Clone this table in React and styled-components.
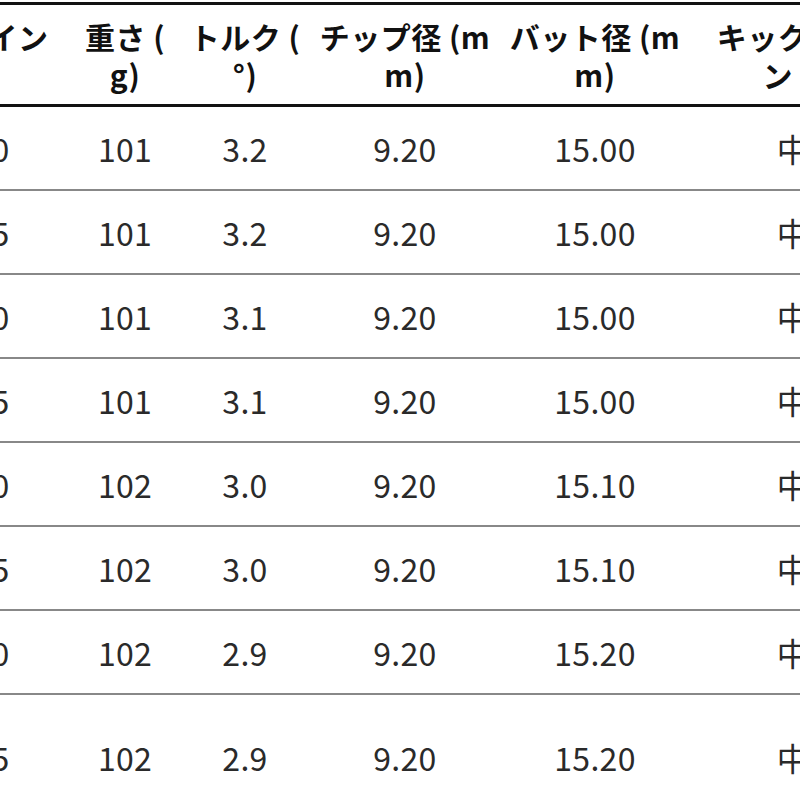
import styled, { createGlobalStyle } from "styled-components";

const GlobalStyle = createGlobalStyle`
    html, body {
        margin: 0;
        padding: 0;
        background: #FFFFFF;
    }
    body {
        font-family: "Noto Sans CJK JP", "Noto Sans", sans-serif;
        color: #222222;
    }
`

const COLUMNS = [
    { width: 174, label: ["長さ (イン", "チ)"] },
    { width: 120, label: ["重さ (", "g)"] },
    { width: 120, label: ["トルク (", "°)"] },
    { width: 200, label: ["チップ径 (m", "m)"] },
    { width: 180, label: ["バット径 (m", "m)"] },
    { width: 216, label: ["キックポイ", "ント"] },
]

const ROWS = [
    ["41.0", "101", "3.2", "9.20", "15.00", "中"],
    ["40.5", "101", "3.2", "9.20", "15.00", "中"],
    ["40.0", "101", "3.1", "9.20", "15.00", "中"],
    ["39.5", "101", "3.1", "9.20", "15.00", "中"],
    ["39.0", "102", "3.0", "9.20", "15.10", "中"],
    ["38.5", "102", "3.0", "9.20", "15.10", "中"],
    ["38.0", "102", "2.9", "9.20", "15.20", "中"],
    ["37.5", "102", "2.9", "9.20", "15.20", "中"],
]

export default function App() {
    return (
        <>
            <GlobalStyle />
            <Viewport>
                <SpecTable>
                    <colgroup>
                        {COLUMNS.map((col, i) => <col key={i} style={{ width: col.width }} />)}
                    </colgroup>
                    <thead>
                        <tr>
                            {COLUMNS.map((col, i) => (
                                <HeadCell key={i}>
                                    {col.label.map((line, j) => <HeadLine key={j}>{line}</HeadLine>)}
                                </HeadCell>
                            ))}
                        </tr>
                    </thead>
                    <tbody>
                        {ROWS.map((row, i) => (
                            <tr key={i}>
                                {row.map((value, j) => (
                                    <Cell key={j} $tall={i === ROWS.length - 1} $last={i === ROWS.length - 1}>
                                        {value}
                                    </Cell>
                                ))}
                            </tr>
                        ))}
                    </tbody>
                </SpecTable>
            </Viewport>
        </>
    )
}

const Viewport = styled.div`
    width: 800px;
    height: 800px;
    overflow: hidden;
    padding-top: 2px;
    box-sizing: border-box;
`

const SpecTable = styled.table`
    table-layout: fixed;
    width: 1010px;
    margin-left: -109px;
    border-collapse: separate;
    border-spacing: 0;
    border-top: 3px solid #111111;
`

const HeadCell = styled.th`
    padding: 12px 0 11px;
    border-bottom: 3px solid #111111;
    font-size: 30px;
    font-weight: 700;
    line-height: 38px;
    letter-spacing: 0.5px;
    color: #111111;
    text-align: center;
    vertical-align: middle;
`

const HeadLine = styled.span`
    display: block;
    white-space: nowrap;
`

const Cell = styled.td`
    padding: ${({ $tall }) => $tall ? "40px 0" : "19px 0"};
    border-bottom: ${({ $last }) => $last ? "none" : "2px solid #888888"};
    font-size: 32px;
    font-weight: 400;
    line-height: 44px;
    letter-spacing: 0.3px;
    color: #2a2a2a;
    text-align: center;
    vertical-align: middle;
    white-space: nowrap;
`
